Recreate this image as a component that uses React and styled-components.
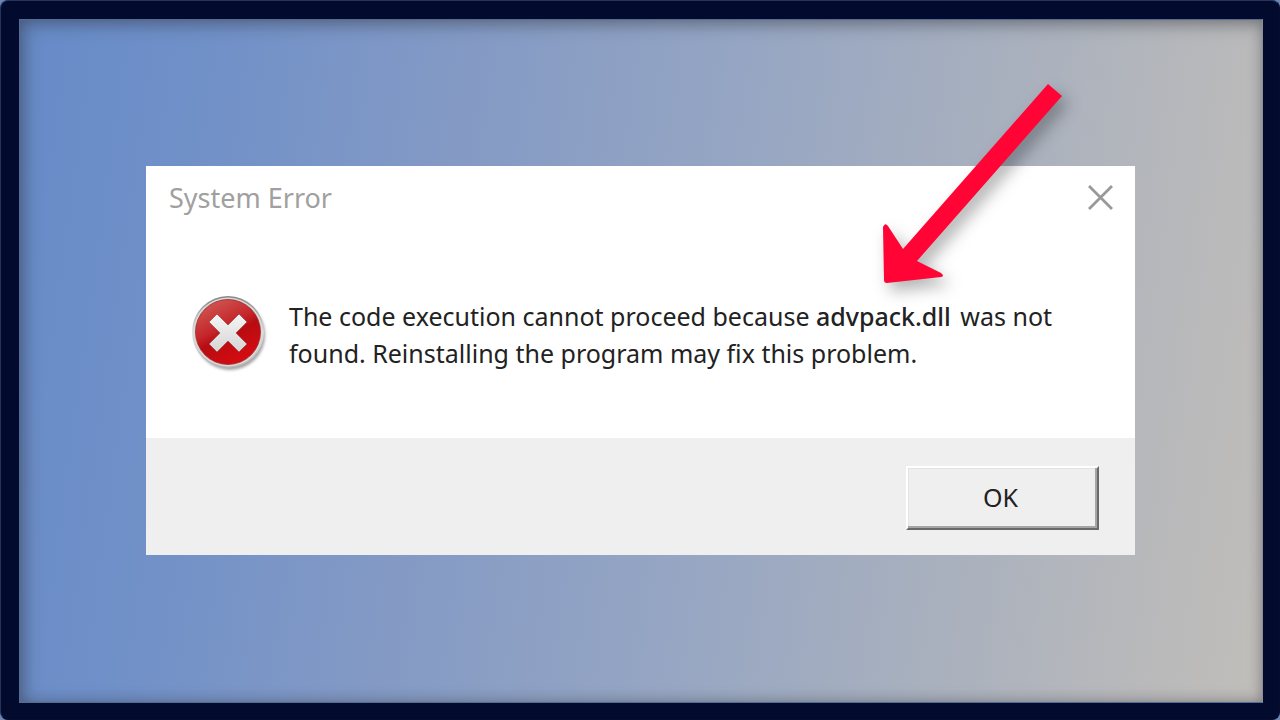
import React from "react";
import styled, { createGlobalStyle } from "styled-components";

const GlobalStyle = createGlobalStyle`
  * {
    box-sizing: border-box;
  }

  body {
    margin: 0;
    background-color: #6d86b4;
    font-family: "Noto Sans", "Open Sans", sans-serif;
  }
`;

const Frame = styled.div`
  min-height: 100vh;
  display: flex;
  border: 1px solid #26345c;
  border-right-color: #050d30;
  border-bottom-color: #050d30;
  border-radius: 8px;
  padding: 18px 16px 16px 18px;
  background-color: #020b2e;
`;

const Desktop = styled.main`
  flex: 1;
  display: flex;
  align-items: center;
  padding: 0 127px 2px 126px;
  border: 1px solid #566b92;
  border-right-color: #8b8e98;
  background: linear-gradient(98deg, #678bc8 0%, #7090c8 14%, #8299c5 32%, #95a5c3 54%, #a8b0be 74%, #b7b8bb 89%, #c1beba 100%);
  box-shadow: inset 4px 4px 18px rgba(40, 45, 55, 0.4), inset 0 0 12px rgba(60, 60, 60, 0.25);
`;

const Dialog = styled.section`
  position: relative;
  flex: 1;
  background-color: #ffffff;
`;

const TitleBar = styled.header`
  display: flex;
  align-items: center;
  justify-content: space-between;
  height: 64px;
  padding: 0 20px 0 23px;
`;

const Title = styled.h1`
  margin: 0;
  font-size: 27px;
  font-weight: 400;
  line-height: 36px;
  color: #a0a0a0;
`;

const CloseButton = styled.button`
  display: flex;
  padding: 0;
  border: 0;
  background: none;
  color: #999999;
`;

const Content = styled.div`
  display: flex;
  align-items: flex-start;
  gap: 20px;
  min-height: 208px;
  padding: 65px 60px 0 43px;
`;

const Message = styled.p`
  margin: 0;
  padding-top: 3px;
  font-size: 25px;
  line-height: 37px;
  color: #222222;
`;

const FileName = styled.strong`
  margin-right: 3px;
  font-weight: 500;
`;

const Footer = styled.footer`
  display: flex;
  justify-content: flex-end;
  padding: 28px 36px 25px;
  background-color: #efefef;
`;

const OkButton = styled.button`
  width: 193px;
  height: 64px;
  padding: 0 4px 2px 0;
  border: 2px solid;
  border-color: #ffffff #696969 #696969 #ffffff;
  background-color: #efefef;
  box-shadow: inset -2px -2px 0 #a5a5a5, inset 1px 1px 0 #e3e3e3;
  font-family: inherit;
  font-size: 25px;
  color: #222222;
`;

const Arrow = styled.svg`
  position: absolute;
  top: -96px;
  right: 55px;
  overflow: visible;
  pointer-events: none;
  filter: drop-shadow(6px 8px 8px rgba(0, 0, 0, 0.3));
`;

const Badge = styled.svg`
  flex-shrink: 0;
`;

const ErrorIcon = () => (
  <Badge width="80" height="80" viewBox="0 0 80 80" role="img" aria-label="Error">
    <defs>
      <linearGradient id="rim" x1="0" y1="0" x2="0" y2="1">
        <stop offset="0" stopColor="#858585" />
        <stop offset="0.5" stopColor="#dedede" />
        <stop offset="1" stopColor="#b5b5b5" />
      </linearGradient>
      <linearGradient id="disc" x1="0.2" y1="0" x2="0.7" y2="1">
        <stop offset="0" stopColor="#cf5b55" />
        <stop offset="0.42" stopColor="#c5262a" />
        <stop offset="0.56" stopColor="#b70c12" />
        <stop offset="1" stopColor="#d80c10" />
      </linearGradient>
      <linearGradient id="cross" x1="0" y1="0" x2="0" y2="1">
        <stop offset="0" stopColor="#f5f5f5" />
        <stop offset="1" stopColor="#d5d5d5" />
      </linearGradient>
      <filter id="soft" x="-20%" y="-20%" width="140%" height="140%">
        <feGaussianBlur stdDeviation="1.6" />
      </filter>
    </defs>
    <circle cx="41" cy="40" r="35" fill="#555555" opacity="0.55" filter="url(#soft)" />
    <circle cx="39" cy="37" r="36" fill="url(#rim)" />
    <circle cx="39" cy="37" r="34.5" fill="#dcd8d8" />
    <circle cx="39" cy="37" r="32.5" fill="url(#disc)" stroke="#9c2a2c" strokeWidth="0.8" />
    <path
      d="M28 19 39 30 50 19 58 27 47 38 58 49 50 57 39 46 28 57 20 49 31 38 20 27Z"
      fill="url(#cross)"
      stroke="#a8474a"
      strokeWidth="0.8"
      strokeLinejoin="round"
    />
  </Badge>
);

const CloseIcon = () => (
  <svg width="28" height="28" viewBox="0 0 28 28" aria-hidden="true">
    <path d="M2 2 25 25M25 2 2 25" fill="none" stroke="currentColor" strokeWidth="2.8" />
  </svg>
);

const App = () => (
  <>
    <GlobalStyle />
    <Frame>
      <Desktop>
        <Dialog role="alertdialog" aria-labelledby="title" aria-describedby="message">
          <TitleBar>
            <Title id="title">System Error</Title>
            <CloseButton type="button" aria-label="Close">
              <CloseIcon />
            </CloseButton>
          </TitleBar>
          <Content>
            <ErrorIcon />
            <Message id="message">
              The code execution cannot proceed because <FileName>advpack.dll</FileName> was not
              found. Reinstalling the program may fix this problem.
            </Message>
          </Content>
          <Footer>
            <OkButton type="button">OK</OkButton>
          </Footer>
          <Arrow width="210" height="230" viewBox="0 0 210 230" aria-hidden="true">
            <path
              d="M178 14 192 26 47 191 71 203Q75 206 71 207L17 213Q14 213 14 210L13 157Q15 152 18 156L33 179Z"
              fill="#ff0435"
            />
          </Arrow>
        </Dialog>
      </Desktop>
    </Frame>
  </>
);

export default App;
